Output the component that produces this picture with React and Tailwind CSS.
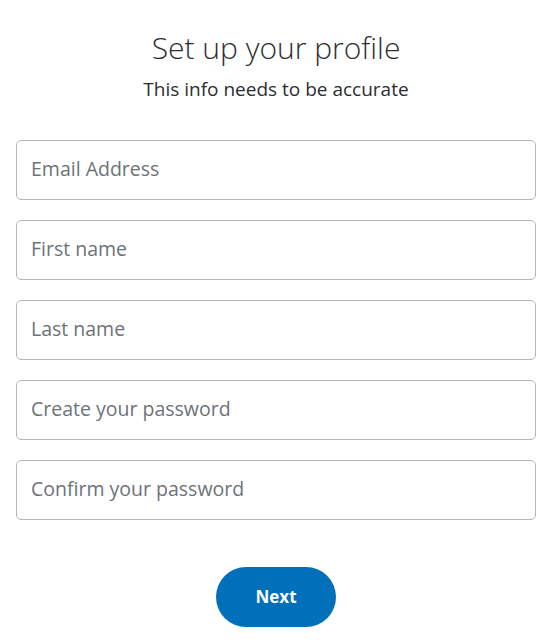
import React, { useState } from 'react';

const fields = [
  { name: 'email', type: 'email', placeholder: 'Email Address' },
  { name: 'firstName', type: 'text', placeholder: 'First name' },
  { name: 'lastName', type: 'text', placeholder: 'Last name' },
  { name: 'password', type: 'password', placeholder: 'Create your password' },
  { name: 'confirmPassword', type: 'password', placeholder: 'Confirm your password' },
];

const App = () => {
  const [formData, setFormData] = useState({});

  const handleChange = (e) => {
    setFormData({ ...formData, [e.target.name]: e.target.value });
  };

  return (
    <div className="min-h-screen w-[552px] bg-white px-4 pt-[28px] font-['Open_Sans',sans-serif]">
      <h1 className="text-center text-[30px] font-light leading-[40px] text-[#2c2e2f]">
        Set up your profile
      </h1>
      <p className="mt-[8px] text-center text-[19px] leading-[26px] text-[#2c2e2f]">
        This info needs to be accurate
      </p>

      <form onSubmit={(e) => e.preventDefault()} className="mt-[38px] flex flex-col gap-5">
        {fields.map((f) => (
          <input
            key={f.name}
            type={f.type}
            name={f.name}
            placeholder={f.placeholder}
            value={formData[f.name] || ''}
            onChange={handleChange}
            className="h-[60px] w-full rounded-[5px] border border-[#b4b6b8] px-[14px] pb-[4px] text-[19.5px] text-[#2c2e2f] outline-none placeholder:text-[#6c7378]"
          />
        ))}

        <div className="mt-[27px] flex justify-center">
          <button
            type="submit"
            className="h-[60px] w-[120px] rounded-full bg-[#0070ba] text-[17px] font-bold text-white"
          >
            Next
          </button>
        </div>
      </form>
    </div>
  );
};

export default App;
